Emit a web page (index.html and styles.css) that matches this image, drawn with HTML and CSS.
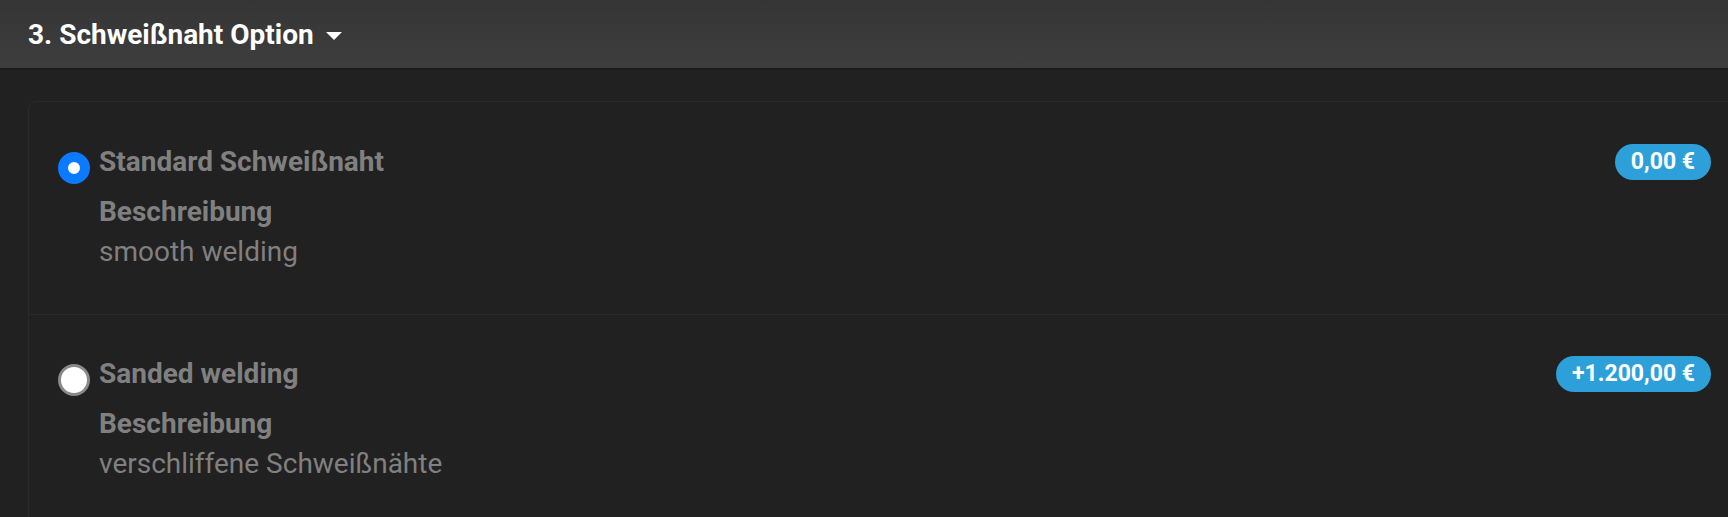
FILE: index.html
```html
<!DOCTYPE html>
<html lang="de">
<head>
  <meta charset="UTF-8" />
  <meta name="viewport" content="width=device-width, initial-scale=1.0" />
  <title>Schweißnaht Option</title>
  <link rel="stylesheet" href="styles.css">
</head>
<body>
<div id="section">
  <div class="section-head">
    <h2>3. Schweißnaht Option</h2>
    <span class="caret"></span>
  </div>
  <div class="section-body">
    <div class="option-card">
      <label class="option">
        <input type="radio" name="weld" value="standard" checked />
        <div class="option-text">
          <div class="option-title">Standard Schweißnaht</div>
          <div class="option-label">Beschreibung</div>
          <div class="option-desc">smooth welding</div>
        </div>
        <span class="price">0,00 €</span>
      </label>
      <label class="option">
        <input type="radio" name="weld" value="sanded" />
        <div class="option-text">
          <div class="option-title">Sanded welding</div>
          <div class="option-label">Beschreibung</div>
          <div class="option-desc">verschliffene Schweißnähte</div>
        </div>
        <span class="price">+1.200,00 €</span>
      </label>
    </div>
  </div>
</div>
</body>
</html>
```

FILE: styles.css
```css
html, body {
  margin: 0; padding: 0;
  height: 100vh; width: 100vw;
  overflow: hidden;
  font-family: Roboto, 'Liberation Sans', sans-serif;
  background: #212121;
  color: #808080;
}
.section-head {
  height: 68px;
  padding-left: 28px;
  display: flex;
  align-items: center;
  background: linear-gradient(#353535, #3e3e3e);
  box-shadow: 0 1px 2px rgba(0,0,0,0.35);
}
.section-head h2 {
  margin: 0;
  font-size: 28px;
  font-weight: 700;
  color: #fff;
}
.caret {
  margin: 4px 0 0 12px;
  width: 0; height: 0;
  border-left: 8px solid transparent;
  border-right: 8px solid transparent;
  border-top: 8px solid #fff;
}
.section-body {
  padding: 33px 0 0 28px;
}
.option-card {
  border: 1px solid #2a2a2a;
  border-radius: 8px;
  margin-right: -12px;
}
.option {
  display: flex;
  align-items: flex-start;
  padding: 42px 28px 47px 29px;
  cursor: pointer;
}
.option:first-child {
  padding-top: 43px;
  padding-bottom: 46px;
}
.option + .option {
  border-top: 1px solid #2a2a2a;
}
.option input {
  appearance: none;
  -webkit-appearance: none;
  margin: 7px 9px 0 0;
  width: 32px; height: 32px;
  border-radius: 50%;
  background: #fff;
  border: 3px solid #8a8a8a;
  box-sizing: border-box;
  flex-shrink: 0;
}
.option input:checked {
  border: 10px solid #0a7bff;
}
.option-text {
  flex: 1;
  font-size: 28px;
}
.option-title {
  font-weight: 700;
  margin-bottom: 17px;
}
.option-label {
  font-weight: 700;
}
.option-desc {
  margin-top: 7px;
}
.price {
  background: #2d9fd9;
  color: #fff;
  font-size: 23px;
  font-weight: 700;
  height: 36px;
  line-height: 36px;
  padding: 0 16px;
  border-radius: 18px;
  margin-top: -1px;
}
```
